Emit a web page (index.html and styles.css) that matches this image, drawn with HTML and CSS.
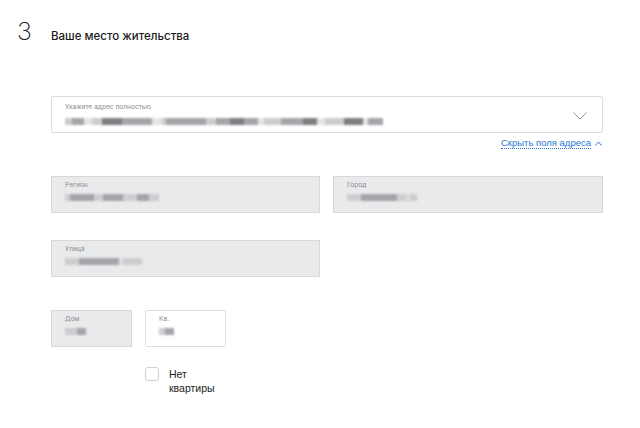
FILE: index.html
```html
<!DOCTYPE html>
<html lang="ru">
<head>
    <meta charset="UTF-8">
    <title>Ваше место жительства</title>
    <link rel="stylesheet" href="styles.css">
</head>
<body>
    <div class="step">
        <div class="step-num">3</div>
        <h2 class="step-title">Ваше место жительства</h2>
    </div>

    <div class="form">
        <!-- Адрес одной строкой -->
        <div class="field field-address">
            <div class="field-body">
                <div class="field-label">Укажите адрес полностью</div>
                <div class="blur">
                    <span class="b1" style="width: 7px"></span><span class="b2" style="width: 12px"></span><span class="b0" style="width: 8px"></span><span class="b1" style="width: 10px"></span><span class="b3" style="width: 20px"></span><span class="b2" style="width: 30px"></span><span class="b0" style="width: 10px"></span><span class="b1" style="width: 4px"></span><span class="b2" style="width: 40px"></span><span class="b1" style="width: 10px"></span><span class="b2" style="width: 14px"></span><span class="b3" style="width: 14px"></span><span class="b2" style="width: 14px"></span><span class="b0" style="width: 6px"></span><span class="b1" style="width: 17px"></span><span class="b2" style="width: 22px"></span><span class="b3" style="width: 14px"></span><span class="b0" style="width: 8px"></span><span class="b1" style="width: 19px"></span><span class="b3" style="width: 19px"></span><span class="b0" style="width: 5px"></span><span class="b2" style="width: 15px"></span>
                </div>
            </div>
            <svg class="chevron" width="14" height="8" viewBox="0 0 14 8">
                <path d="M0.5 0.5 L7 7 L13.5 0.5" fill="none" stroke="#8e8e8e" stroke-width="1"/>
            </svg>
        </div>

        <div class="toggle-row">
            <a class="toggle-link" href="#">Скрыть поля адреса</a>
            <svg class="caret" width="7" height="5" viewBox="0 0 7 5">
                <path d="M0.5 4.5 L3.5 1 L6.5 4.5" fill="none" stroke="#2a76cf" stroke-width="1"/>
            </svg>
        </div>

        <div class="row row-half">
            <div class="field field-locked">
                <div class="field-label">Регион</div>
                <div class="blur">
                    <span class="b1" style="width: 5px"></span><span class="b2" style="width: 24px"></span><span class="b1" style="width: 9px"></span><span class="b2" style="width: 20px"></span><span class="b1" style="width: 14px"></span><span class="b2" style="width: 12px"></span><span class="b1" style="width: 10px"></span>
                </div>
            </div>
            <div class="field field-locked">
                <div class="field-label">Город</div>
                <div class="blur">
                    <span class="b1" style="width: 14px"></span><span class="b2" style="width: 36px"></span><span class="b1" style="width: 10px"></span><span class="b0" style="width: 3px"></span><span class="b1" style="width: 7px"></span>
                </div>
            </div>
        </div>

        <div class="row row-half">
            <div class="field field-locked">
                <div class="field-label">Улица</div>
                <div class="blur">
                    <span class="b1" style="width: 14px"></span><span class="b2" style="width: 40px"></span><span class="b0" style="width: 4px"></span><span class="b1" style="width: 19px"></span>
                </div>
            </div>
        </div>

        <div class="row row-small">
            <div class="field field-locked">
                <div class="field-label">Дом</div>
                <div class="blur">
                    <span class="b1" style="width: 12px"></span><span class="b2" style="width: 9px"></span>
                </div>
            </div>
            <div class="field">
                <div class="field-label">Кв.</div>
                <div class="blur">
                    <span class="b1" style="width: 6px"></span><span class="b2" style="width: 9px"></span>
                </div>
            </div>
        </div>

        <label class="no-flat">
            <span class="checkbox"></span>
            <span class="no-flat-text">Нет<br>квартиры</span>
        </label>
    </div>
</body>
</html>
```

FILE: styles.css
```css
/* Общие настройки страницы */
body {
    margin: 0;
    background-color: #ffffff;
    font-family: "Inter", "Liberation Sans", sans-serif;
    color: #1f1f1f;
}

/* Заголовок шага */
.step {
    display: flex;
    align-items: baseline;
    padding: 16px 0 0 17px;
}

.step-num {
    width: 34px;
    font-size: 25px;
    font-weight: 200;
    line-height: 30px;
    color: #222222;
}

.step-title {
    margin: 0;
    font-size: 11.5px;
    font-weight: 500;
    color: #1a1a1a;
}

/* Форма адреса */
.form {
    width: 552px;
    margin: 50px 0 0 51px;
}

.field {
    box-sizing: border-box;
    height: 37px;
    padding: 4px 13px 0;
    border: 1px solid #dcdddf;
    border-radius: 2px;
    background-color: #ffffff;
}

.field-address {
    display: flex;
    align-items: center;
    justify-content: space-between;
    padding-top: 0;
    padding-right: 15px;
}

.field-locked {
    background-color: #e9eaec;
    border-color: #d6d8da;
    border-radius: 0;
}

.field-label {
    font-size: 6.6px;
    line-height: 9px;
    color: #8a8c8f;
}

/* Размытое значение поля */
.blur {
    display: flex;
    align-items: center;
    height: 9px;
    margin-top: 3px;
    filter: blur(1px);
}

.blur span {
    display: block;
    height: 7px;
}

.blur .b0 { background-color: #e4e5e7; }
.blur .b1 { background-color: #cbcdcf; }
.blur .b2 { background-color: #a3a5a8; }
.blur .b3 { background-color: #7d7f82; }

.field-locked .blur .b0 { background-color: #dedfe1; }

.field-address .blur {
    margin-top: 5px;
}

.chevron {
    display: block;
    margin-top: 2px;
}

/* Ссылка "Скрыть поля адреса" */
.toggle-row {
    display: flex;
    align-items: center;
    justify-content: flex-end;
    gap: 4px;
    margin-top: 4px;
    padding-right: 1px;
}

.toggle-link {
    font-family: "Liberation Sans", sans-serif;
    font-size: 9.5px;
    line-height: 11px;
    color: #2a76cf;
    text-decoration: none;
    border-bottom: 1px dotted #2a76cf;
}

/* Ряды полей */
.row {
    display: grid;
    gap: 13px;
}

.row-half {
    grid-template-columns: 269px 270px;
    margin-top: 27px;
}

.row-small {
    grid-template-columns: 81px 81px;
    margin-top: 33px;
}

/* Чекбокс "Нет квартиры" */
.no-flat {
    display: flex;
    align-items: flex-start;
    margin: 20px 0 0 94px;
}

.checkbox {
    box-sizing: border-box;
    width: 14px;
    height: 14px;
    border: 1px solid #cfd0d2;
    border-radius: 3px;
}

.no-flat-text {
    margin-left: 10px;
    font-family: "Liberation Sans", sans-serif;
    font-size: 10.5px;
    line-height: 14px;
    color: #222222;
}
```
